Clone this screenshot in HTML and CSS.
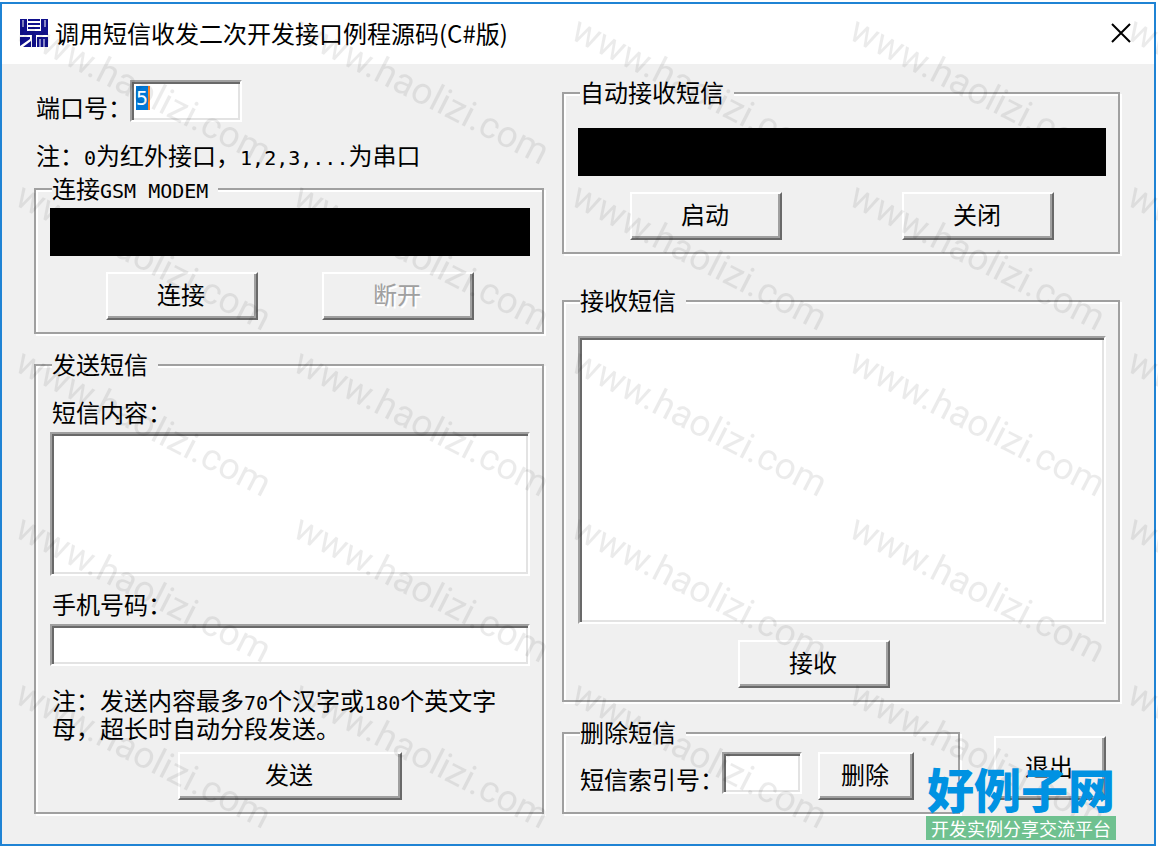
FILE: index.html
```html
<!DOCTYPE html>
<html lang="zh-CN">
<head>
<meta charset="utf-8">
<title>调用短信收发二次开发接口例程源码(C#版)</title>
<link rel="stylesheet" href="styles.css">
</head>
<body>
<main class="window">
  <header class="titlebar">
    <svg class="app-icon" viewBox="0 0 30 30" aria-hidden="true">
      <path class="ink" d="M1 1h7v12h14V1h7v16H1zM1 19h10v2L1 28zM4 29l8-6v6zM13 16h4v13h-4zM18 19h11v10H18z"/>
      <path class="ink" d="M9 1h12v2H9zM9 5h12v2H9zM9 9h12v2H9z"/>
      <path class="cut-line" d="M4 2v7M26 2v7M25 21v8M21 21v8"/>
    </svg>
    <h1 class="title">调用短信收发二次开发接口例程源码(C#版)</h1>
    <button class="close" type="button" aria-label="关闭窗口">
      <svg viewBox="0 0 20 20" aria-hidden="true"><path d="M1 1l18 18M19 1L1 19"/></svg>
    </button>
  </header>

  <form class="client">
    <div class="column">
      <div class="port-row">
        <label class="tight-label" for="port">端口号：</label>
        <input class="field port selected" id="port" type="text" value="5">
      </div>
      <p class="port-note">注：<span class="half">0</span>为红外接口，<span class="half">1,2,3,...</span>为串口</p>

      <fieldset class="group connect">
        <legend>连接<span class="half">GSM MODEM</span></legend>
        <output class="screen"></output>
        <div class="buttons gap-medium">
          <button class="button" type="button">连接</button>
          <button class="button" type="button" disabled>断开</button>
        </div>
      </fieldset>

      <fieldset class="group send">
        <legend>发送短信</legend>
        <label class="field-label" for="message">短信内容：</label>
        <textarea class="field message" id="message"></textarea>
        <label class="field-label" for="phone">手机号码：</label>
        <input class="field phone" id="phone" type="text">
        <p class="send-note">注：发送内容最多<span class="half">70</span>个汉字或<span class="half">180</span>个英文字<br>母，超长时自动分段发送。</p>
        <div class="buttons send-buttons">
          <button class="button wide" type="button">发送</button>
        </div>
      </fieldset>
    </div>

    <div class="column right">
      <fieldset class="group auto">
        <legend>自动接收短信</legend>
        <output class="screen"></output>
        <div class="buttons gap-large">
          <button class="button" type="button">启动</button>
          <button class="button" type="button">关闭</button>
        </div>
      </fieldset>

      <fieldset class="group receive">
        <legend>接收短信</legend>
        <textarea class="field inbox" aria-label="接收短信"></textarea>
        <div class="buttons receive-buttons">
          <button class="button" type="button">接收</button>
        </div>
      </fieldset>

      <div class="bottom-row">
        <fieldset class="group delete">
          <legend>删除短信</legend>
          <div class="delete-row">
            <label class="tight-label" for="index">短信索引号：</label>
            <input class="field index" id="index" type="text">
            <button class="button small" type="button">删除</button>
          </div>
        </fieldset>
        <button class="button exit" type="button">退出</button>
      </div>
    </div>
  </form>
</main>

<svg class="watermark" aria-hidden="true">
  <defs>
    <pattern id="mark" x="288" y="10" width="278" height="166" patternUnits="userSpaceOnUse">
      <text transform="translate(3 28) rotate(27)">www.haolizi.com</text>
    </pattern>
  </defs>
  <rect width="100%" height="100%" fill="url(#mark)"/>
</svg>

<div class="brand">
  <strong class="brand-name">好例子网</strong>
  <span class="brand-tag">开发实例分享交流平台</span>
</div>
</body>
</html>
```

FILE: styles.css
```css
* {
  box-sizing: border-box;
}

body {
  margin: 0;
  padding: 2px 2px 4px 0;
  background: #fff;
  color: #000;
  font: 24px/24px "Noto Sans CJK SC", sans-serif;
  position: relative;
  overflow: hidden;
}

button,
input,
textarea {
  margin: 0;
  font: inherit;
  color: inherit;
}

p,
h1 {
  margin: 0;
}

.half {
  font-family: "DejaVu Sans Mono", monospace;
  font-size: 20px;
  line-height: 1px;
}

.window {
  border: 2px solid #1f83d4;
  background: #f0f0f0;
}

.titlebar {
  display: flex;
  align-items: center;
  height: 60px;
  padding: 0 23px 2px 17px;
  background: #fff;
}

.app-icon {
  width: 30px;
  height: 30px;
}

.ink {
  fill: #10108c;
}

.cut-line {
  fill: none;
  stroke: #fff;
  stroke-width: 1;
}

.title {
  flex: 1;
  margin-left: 6px;
  font-size: 24px;
  font-weight: 400;
}

.close {
  padding: 0;
  border: 0;
  background: none;
  line-height: 0;
}

.close svg {
  width: 20px;
  height: 20px;
  fill: none;
  stroke: #000;
  stroke-width: 2;
}

.client {
  display: grid;
  grid-template-columns: 510fr 558fr;
  column-gap: 18px;
  padding: 16px 34px 30px 32px;
}

.column {
  display: flex;
  flex-direction: column;
  min-width: 0;
}

.right {
  padding-top: 1px;
}

.field {
  display: block;
  width: 100%;
  height: 42px;
  padding: 4px;
  border: 2px solid;
  border-color: #a0a0a0 #fff #fff #a0a0a0;
  border-radius: 0;
  background: #fff;
  box-shadow: inset 2px 2px #696969, inset -2px -2px #e3e3e3;
  outline: 0;
  resize: none;
}

.port-row {
  display: flex;
  align-items: flex-end;
}

.tight-label {
  padding: 0 0 3px 2px;
  margin-right: -2px;
  white-space: nowrap;
}

.port {
  width: 112px;
  padding: 4px 4px 10px;
}

.selected {
  color: #fff;
  font-family: "DejaVu Sans Mono", monospace;
  font-size: 20px;
  background:
    linear-gradient(#0078d7, #0078d7) 4px 4px / 12px 24px no-repeat,
    linear-gradient(#ff8728, #ff8728) 16px 4px / 2px 24px no-repeat,
    #fff;
}

.port-note {
  margin: 21px 0 10px;
  padding-left: 2px;
}

.group {
  min-width: 0;
  margin: 0;
  padding: 7px 12px 12px 14px;
  border: 2px solid #a0a0a0;
  box-shadow: inset 2px 2px #fff, 2px 2px #fff;
}

.group legend {
  margin-left: 2px;
  padding: 0 10px 2px 0;
  line-height: 22px;
  background: #f0f0f0;
}

.screen {
  display: block;
  height: 48px;
  background: #000;
}

.buttons {
  display: flex;
  justify-content: center;
  margin-top: 16px;
}

.gap-medium {
  gap: 64px;
}

.gap-large {
  gap: 120px;
}

.button {
  width: 152px;
  height: 48px;
  padding: 0 2px 4px 0;
  border: 2px solid;
  border-color: #fff #696969 #696969 #fff;
  border-radius: 0;
  background: #f0f0f0;
  box-shadow: inset -2px -2px #a0a0a0;
}

.button:disabled {
  color: #a0a0a0;
  text-shadow: 2px 2px #fff;
}

.wide {
  width: 224px;
}

.small {
  width: 96px;
}

.exit {
  width: 112px;
  height: 64px;
}

.send {
  margin-top: 19px;
}

.auto,
.send,
.receive {
  padding-top: 23px;
}

.field-label {
  display: block;
  padding-left: 2px;
  margin-bottom: 8px;
}

.message {
  height: 144px;
  margin-bottom: 16px;
}

.send-note {
  margin-top: 20px;
  padding-left: 2px;
  line-height: 28px;
  white-space: nowrap;
}

.send-buttons {
  margin-top: 10px;
}

.receive {
  margin-top: 35px;
}

.receive-buttons {
  padding-right: 56px;
}

.inbox {
  height: 288px;
}

.bottom-row {
  display: flex;
  align-items: flex-end;
  justify-content: space-between;
  margin-top: 19px;
  padding-right: 14px;
}

.delete {
  width: 398px;
}

.delete-row {
  display: flex;
  align-items: flex-start;
}

.delete-row .tight-label {
  padding-top: 15px;
}

.index {
  width: 80px;
  margin-right: 16px;
}

.bottom-row .exit {
  margin-bottom: 14px;
}

.watermark {
  position: absolute;
  inset: 0;
  width: 100%;
  height: 100%;
  pointer-events: none;
}

.watermark text {
  font: 37px Roboto, Arial, sans-serif;
  fill: #000;
  fill-opacity: 0.08;
}

.brand {
  position: absolute;
  right: 42px;
  bottom: 10px;
  width: 190px;
  text-align: center;
  white-space: nowrap;
  pointer-events: none;
}

.brand-name {
  display: block;
  padding-bottom: 6px;
  color: #0092e2;
  font-size: 47px;
  font-weight: 900;
  line-height: 44px;
}

.brand-tag {
  display: block;
  background: #6fc190;
  color: #fff;
  font-size: 18px;
  line-height: 24px;
}
```
